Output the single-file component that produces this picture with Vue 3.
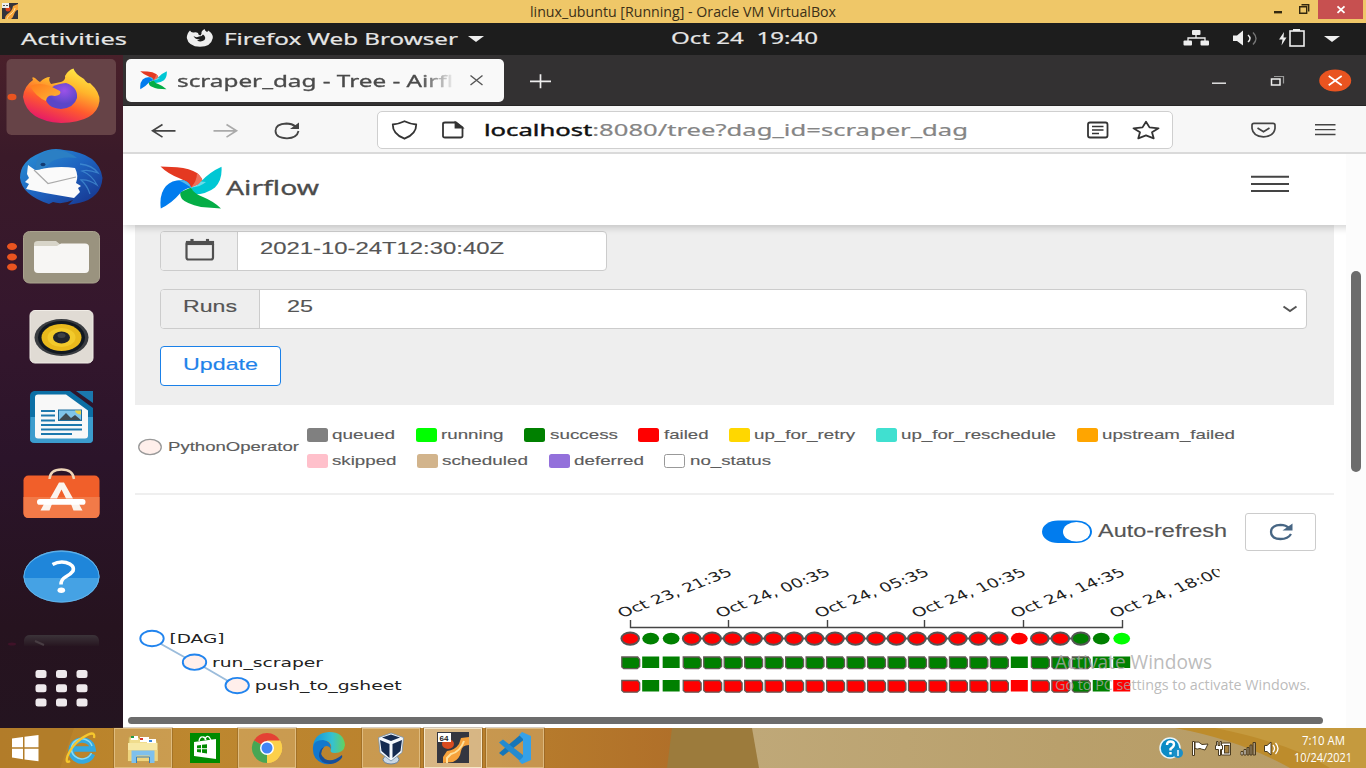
<script setup>
import { h } from 'vue'

// Single line of text fitted to a given width, drawn on baseline b
const T = (p) =>
  h('svg', { width: p.w, height: p.h, viewBox: `0 0 ${p.w} ${p.h}`, overflow: 'visible' }, [
    h('text', { x: 0, y: p.b, 'font-size': p.s, textLength: p.w, lengthAdjust: 'spacingAndGlyphs', fill: 'currentColor' }, p.t),
  ])
T.props = ['t', 'w', 'h', 'b', 's']

const legend = [
  [
    { t: 'queued', w: 63, c: 'gray' },
    { t: 'running', w: 62.5, c: 'lime' },
    { t: 'success', w: 68, c: 'green' },
    { t: 'failed', w: 44.5, c: 'red' },
    { t: 'up_for_retry', w: 101, c: 'gold' },
    { t: 'up_for_reschedule', w: 155, c: 'turquoise' },
    { t: 'upstream_failed', w: 133, c: 'orange' },
  ],
  [
    { t: 'skipped', w: 64.5, c: 'pink' },
    { t: 'scheduled', w: 86, c: 'tan' },
    { t: 'deferred', w: 70, c: 'mediumpurple' },
    { t: 'no_status', w: 81, c: 'white', line: true },
  ],
]

const plain = [1, 2, 19, 23, 24]
const runs = Array.from({ length: 25 }, (_, i) => {
  const ok = [1, 2, 22, 23].includes(i)
  return {
    x: 630.2 + i * 20.48,
    edge: !plain.includes(i),
    dag: i === 24 ? '#00ff00' : ok ? '#008000' : '#ff0000',
    push: ok ? '#008000' : '#ff0000',
  }
})
const ticks = [
  { x: 630.5, t: 'Oct 23, 21:35' },
  { x: 728.5, t: 'Oct 24, 00:35' },
  { x: 827.5, t: 'Oct 24, 05:35' },
  { x: 924.5, t: 'Oct 24, 10:35' },
  { x: 1023.5, t: 'Oct 24, 14:35' },
  { x: 1122.5, t: 'Oct 24, 18:00' },
]
const nodes = [
  { x: 152, y: 638.5, t: '[DAG]', w: 55, f: '#fff' },
  { x: 194.5, y: 662.2, t: 'run_scraper', w: 111, f: '#ffefeb' },
  { x: 237.2, y: 685.6, t: 'push_to_gsheet', w: 147, f: '#ffefeb' },
]
const dots = [0, 1, 2, 3, 4, 5, 6, 7, 8].map((i) => ({ x: 35.5 + (i % 3) * 20.5, y: 13 + Math.floor(i / 3) * 14.2 }))
</script>

<template>
  <div class="screen">
    <header class="title">
      <svg width="20" height="23" viewBox="0 0 20 23">
        <rect x="2" y="3" width="16" height="16" fill="#33343c" />
        <path d="M5 19 C5 13 12 14 13 6 L18 4 V10 C14 10 14 18 11 19Z" fill="#f8a63a" />
        <path d="M7 19 C8 14 14 14 15 8" stroke="#ffe5a8" fill="none" />
        <circle cx="8" cy="9" r="2.5" fill="#e0421b" />
        <rect x="2" y="3" width="7" height="5" fill="#eee" />
        <path d="M3 5.5h2m1 0h2" stroke="#555" />
      </svg>
      <T class="caption" t="linux_ubuntu [Running] - Oracle VM VirtualBox" :w="306" :h="23" :b="17.2" :s="14.6" />
      <svg class="winctl" width="96" height="23" viewBox="1270 0 96 23">
        <rect x="1274" y="11" width="8" height="2.4" fill="#33280f" />
        <path d="M1299.7 6.7h7v6.6h-7zM1301.5 4.7h7.2v6.8" stroke="#33280f" stroke-width="1.4" fill="none" />
        <rect x="1318" y="0" width="45" height="19" fill="#c75050" />
        <path d="M1337.5 6.3l7 6.6m0-6.6l-7 6.6" stroke="#fff" stroke-width="1.8" />
      </svg>
    </header>

    <div class="topbar ubuntu">
      <T class="act" t="Activities" :w="106" :h="32" :b="22" :s="17" />
      <svg class="fxmono" width="28" height="32" viewBox="186 23 28 32">
        <path d="M186.800 38 Q187 33 190 30.500 Q191 33 194 32.500 Q196 32 198 33 Q198 35 200.500 35.500 Q202 33.500 201.500 32 Q202.500 29.800 204.500 29 Q205 31 207 32 Q208 31.500 208 30.500 Q213 33 212.800 38 Q211 46.800 200 46.800 Q188.500 46.500 186.800 38Z" fill="#eee" />
        <path d="M193.500 36 Q196 38 199 36.500 Q202 36.500 203 34.500 Q206.500 37 204.500 40 Q201 42.500 197 40.500 L200 39.500 Q195 39.500 193.500 36Z" fill="#1d1d1d" />
      </svg>
      <T class="app" t="Firefox Web Browser" :w="234" :h="32" :b="22" :s="17" />
      <svg class="caret" width="16" height="32" viewBox="0 0 16 32"><path d="M0 13h16l-8 6z" fill="#eee" /></svg>
      <T class="clock" t="Oct 24&nbsp; 19:40" :w="147" :h="32" :b="21" :s="17" />
      <svg class="tray" width="160" height="32" viewBox="1182 23 160 32">
        <g fill="#eee">
          <rect x="1192" y="30" width="8.500" height="5" rx="1" />
          <rect x="1183.500" y="40.500" width="8.500" height="5" rx="1" />
          <rect x="1200.500" y="40.500" width="8.500" height="5" rx="1" />
          <path d="M1233 35.500h4l6-5v15l-6-4.500h-4z" />
          <path d="M1284 32l-5 7.500h3.500l-1 6 5-8h-3z" />
          <rect x="1293" y="29" width="7" height="2" />
          <path d="M1324 36h16l-8 6z" />
        </g>
        <g fill="none" stroke="#eee">
          <path d="M1196 35v3M1188 41v-3h17v3" stroke-width="1.300" />
          <path d="M1248 35q4 3.500 0 7" stroke-width="1.500" />
          <path d="M1253 32.500q6 6 0 12" stroke="#777" stroke-width="1.400" />
          <rect x="1290" y="31" width="14" height="15" stroke-width="1.600" />
        </g>
      </svg>
    </div>

    <div class="body">
      <nav class="dock">
        <svg width="123" height="80" viewBox="0 57 123 80">
          <defs>
            <linearGradient id="fx" x1="0.8" y1="0" x2="0.3" y2="1"><stop offset="0" stop-color="#fff04a" /><stop offset=".35" stop-color="#ffb52b" /><stop offset=".65" stop-color="#ff5b2e" /><stop offset="1" stop-color="#e4156c" /></linearGradient>
            <linearGradient id="fx2" x1="0" y1="0" x2="1" y2="1"><stop offset="0" stop-color="#ff7a1e" /><stop offset="1" stop-color="#ffb733" /></linearGradient>
            <radialGradient id="fxp" cx=".6" cy=".3"><stop offset="0" stop-color="#9b52e8" /><stop offset="1" stop-color="#5a46c8" /></radialGradient>
          </defs>
          <rect x="6.500" y="59" width="109.500" height="76" rx="5" fill="#664347" />
          <ellipse cx="12" cy="97" rx="4.500" ry="3.200" fill="#e95420" />
          <path d="M23 97 Q24 86 33 80 Q31 76 35 78 Q38 81 40 82 Q45 77 50 77 Q48 80 51 84 L61 82 Q66 80 65 76 Q68 70 73.500 68.500 Q75 74 84 79 Q87 84 90 83 Q100 92 99.500 101 Q97 122 61 123 Q27 121 23 97Z" fill="url(#fx)" />
          <path d="M45 96 Q50 84 66 83 Q78 87 77 98 Q74 108 61 109 Q46 108 45 96Z" fill="url(#fxp)" />
          <path d="M30 86 Q39 82 50 86 L60 91 Q62 95 55 96 Q47 94 46 101 Q36 97 30 86Z" fill="url(#fx2)" />
        </svg>
        <svg width="123" height="80" viewBox="0 137 123 80">
          <defs><linearGradient id="tb" x1="0" y1="0" x2="1" y2="1"><stop offset="0" stop-color="#2b94d6" /><stop offset=".5" stop-color="#1e63c0" /><stop offset="1" stop-color="#162f88" /></linearGradient></defs>
          <path d="M20 178 Q20 161 40 153 Q52 147 64 150 Q99 153 102.500 178 Q101 198 79 203 L68 205 L73 200 Q62 205 53 202 L49 204 Q22 195 20 178Z" fill="url(#tb)" />
          <path d="M28 165 L35 170 Q58 165 75 168 Q79 176 76 183 L81 186 L78 188 L80 192 L74 198 L45 193 L26 189 L29 184 L25 182 L29 178 L27 174Z" fill="#fafafa" />
          <path d="M34 170 L48 183.500 L76 177" fill="none" stroke="#aaa" stroke-width="1.200" />
          <path d="M36 170 Q34 153 53 150 Q66 149 77 158 Q60 156 51 162 Q44 170 36 170Z" fill="#2b7fc4" />
          <ellipse cx="43" cy="164.500" rx="2.500" ry="1.800" fill="#123b72" />
          <path d="M80 164 q12 1 18 9 q-10 -4-16-2 q10 4 15 14 q-9-6-16-5 q6 5 9 14" fill="none" stroke="#4e9fdc" stroke-width="1.300" opacity=".6" />
        </svg>
        <svg width="123" height="80" viewBox="0 217 123 80">
          <ellipse v-for="y in [246.500, 257, 267]" :key="y" cx="12" :cy="y" rx="5" ry="3.500" fill="#e95420" />
          <rect x="23.500" y="231.500" width="76" height="51.500" rx="6" fill="#9a937f" stroke="#aaa38e" />
          <path d="M34 244 q0-3 4-3 h18 l5 4 h23 v5 h-50z" fill="#d8d5c9" />
          <path d="M34 246 h23 l4-2.500 h24 q4 0 4 3.500 v22 q0 4-4 4 h-47 q-4 0-4-4z" fill="#f7f6f4" />
        </svg>
        <svg width="123" height="80" viewBox="0 297 123 80">
          <rect x="30" y="310.500" width="63" height="52.500" rx="5" fill="#e0dbd4" stroke="#f0ece6" />
          <ellipse cx="61.500" cy="337.500" rx="27" ry="18.500" fill="#393c40" />
          <ellipse cx="61.500" cy="337.500" rx="23.500" ry="16.500" fill="#111820" />
          <ellipse cx="61.500" cy="337.500" rx="20" ry="13.500" fill="#e8b91c" />
          <ellipse cx="61.500" cy="337.500" rx="14" ry="9.500" fill="#f2ca2b" />
          <ellipse cx="61.500" cy="337.500" rx="8.500" ry="6" fill="#20242b" />
          <ellipse cx="61.500" cy="335.500" rx="4" ry="2.500" fill="#3c4046" />
        </svg>
        <svg width="123" height="80" viewBox="0 377 123 80">
          <path d="M34 391 h36 l23 17 v31 q0 4-4 4 h-54 q-5 0-5-4 v-43 q0-4 4-5z" fill="#0c6fa5" />
          <path d="M30.500 417h62.500v22q0 4-4 4h-54q-5 0-5-4z" fill="#3c9ccd" />
          <path d="M76 391 h17 v12z" fill="#1b77ad" />
          <path d="M38 394.500 h28 l22 16 v25 q0 3-3 3 h-47 q-3 0-3-3 v-38 q0-3 3-3z" fill="#f8f8f8" />
          <path d="M41 411h14M41 415.500h14M41 420.500h14M41 425h41M41 429.500h41M41 434h31" stroke="#1d78ad" stroke-width="2" />
          <rect x="58.500" y="410" width="23" height="10.500" fill="#7fc5ea" stroke="#1d6c9c" />
          <path d="M59 420l7-7 5 5 4-3 6 5z" fill="#3f4b52" />
          <path d="M75 410.500h6v4q-5 0-6-4z" fill="#e8d44b" />
        </svg>
        <svg width="123" height="80" viewBox="0 457 123 80">
          <rect x="23.500" y="475.500" width="76" height="42.500" rx="5" fill="#f15f2a" />
          <path d="M23.500 497h76v16q0 5-5 5h-66q-5 0-5-5z" fill="#f27a48" />
          <path d="M49.500 479 Q50 469.500 61.500 469.500 Q73 469.500 74 479" fill="none" stroke="#eed5b8" stroke-width="2.400" />
          <path d="M59 482.500h5l9 16h-7l-4.500-9-4.500 9h-7zM44 504h8l-2.500 6.500h-9zM71 504h8l3.500 6.500h-9z" fill="#fbf4ee" />
          <rect x="37" y="499" width="48.500" height="5.800" rx="2.900" fill="#fff" />
        </svg>
        <svg width="123" height="80" viewBox="0 537 123 80">
          <ellipse cx="61.500" cy="576.500" rx="38" ry="26" fill="#45a2e4" />
          <path d="M23.500 578a38 26 0 0 1 76 0z" fill="#1f86da" />
          <ellipse cx="61.500" cy="576.500" rx="37.500" ry="25.600" fill="none" stroke="#6ab8ec" stroke-width=".8" />
          <path d="M52.500 564.500 Q59 561 66 562.500 Q75 565 73 571 Q71 574 65.500 577 Q61 579.500 61 584.500" fill="none" stroke="#fff" stroke-width="3.600" />
          <ellipse cx="61.300" cy="590.200" rx="3.800" ry="2.700" fill="#fff" />
        </svg>
        <svg width="123" height="48" viewBox="0 617 123 48">
          <defs><linearGradient id="term" x1="0" y1="0" x2="0" y2="1"><stop offset="0" stop-color="#3b3339" /><stop offset="1" stop-color="#271620" /></linearGradient></defs>
          <path d="M24 646v-6q1-5 6-5h63q5 0 6 5v6z" fill="url(#term)" />
          <path d="M35 641l9 4" stroke="#483d43" stroke-width="2" />
          <ellipse cx="12" cy="644" rx="4" ry="1.500" fill="#3f1228" />
        </svg>
        <svg width="123" height="50" viewBox="0 8 123 50">
          <rect v-for="(d, i) in dots" :key="i" :x="d.x" :y="d.y" width="11" height="8" rx="2.500" fill="#eee9ec" />
        </svg>
      </nav>

      <section class="browser">
        <div class="tabs ubuntu">
          <div class="tab">
            <svg class="fav" width="27" height="18.500" viewBox="0 0 62 43" preserveAspectRatio="none"><use href="#pinwheel" /></svg>
            <T class="tabname" t="scraper_dag - Tree - Airfl" :w="276" :h="43" :b="28" :s="17" />
            <svg class="tabx" width="14" height="43" viewBox="0 0 14 43"><path d="M.500 16.500l12 9.500m0-9.500l-12 9.500" stroke="#555" stroke-width="1.400" /></svg>
          </div>
          <svg class="plus" width="22" height="51" viewBox="0 0 22 51"><path d="M0 26.300h21M10.500 19.300v14" stroke="#eee" stroke-width="1.700" /></svg>
          <svg class="ctl" width="146" height="51" viewBox="1210 55 146 51">
            <path d="M1212 83.200h14" stroke="#eee" stroke-width="1.400" />
            <rect x="1271.500" y="79" width="8.500" height="6" fill="none" stroke="#eee" stroke-width="1.500" />
            <path d="M1274 76.500h9.500v7" fill="none" stroke="#999" stroke-width="1.200" />
            <ellipse cx="1335.200" cy="80.500" rx="16" ry="11" fill="#e95420" />
            <path d="M1328.700 76l13 9.300m0-9.300l-13 9.300" stroke="#fff" stroke-width="1.700" />
          </svg>
        </div>

        <div class="toolbar ubuntu">
          <svg class="nav" width="150" height="48" viewBox="151 106 150 48" fill="none">
            <path d="M175.500 130.800h-23m10-6.300l-10 6.300 10 6.300" stroke="#444" stroke-width="1.700" />
            <path d="M213.500 130.800h23m-10-6.300l10 6.300-10 6.300" stroke="#aaa" stroke-width="1.700" />
            <path d="M295.500 126.500Q292 123.500 286.500 123.500Q275.500 124 275.500 130.800Q275.500 138 287 138.300Q297 138 298.500 131" stroke="#444" stroke-width="1.800" />
            <path d="M299 122.500v6.500h-9z" fill="#444" />
          </svg>
          <div class="url">
            <svg width="76" height="36" viewBox="390 112 76 36" fill="none" stroke="#333" stroke-width="1.800">
              <path d="M404.500 121.300 Q410 124 416.200 124.500 Q416.500 134 404.500 138.700 Q392.500 134 392.800 124.500 Q399 124 404.500 121.300Z" />
              <path d="M445 122.500h11l6.500 5v8.500q0 1.500-2 1.500h-15.500q-2 0-2-1.500v-12q0-1.500 2-1.500z" />
              <path d="M455.500 122.500v5h6.500z" fill="#333" />
            </svg>
            <svg class="addr" width="484" height="36" viewBox="0 0 484 36"><text x="0" y="24.400" font-size="17" textLength="484" lengthAdjust="spacingAndGlyphs" fill="#858585"><tspan class="host">localhost</tspan>:8080/tree?dag_id=scraper_dag</text></svg>
            <svg class="acts" width="74" height="36" viewBox="1086 112 74 36" fill="none" stroke="#333" stroke-width="1.800">
              <rect x="1088" y="122.500" width="19.500" height="15" rx="2" />
              <path d="M1092 126.500h11.500M1092 130h11.500M1092 133.500h7" stroke-width="1.300" />
              <path d="M1146 121.700l3.500 5.700 9 .9-6.500 4 1.700 6-7.700-3-7.700 3 1.700-6-6.500-4 9-.9z" stroke-linejoin="round" />
            </svg>
          </div>
          <svg class="menu" width="88" height="48" viewBox="1250 106 88 48" fill="none" stroke="#444" stroke-width="1.700">
            <path d="M1254 123.300h19q2 0 2 2v3q-1 8-11.500 8.500q-10.500-.5-11.500-8.500v-3q0-2 2-2zM1257.500 128l6 3.800 6-3.800" />
            <path d="M1315 124.800h20.500M1315 129.600h20.500M1315 134.500h20.500" stroke-width="1.400" />
          </svg>
        </div>

        <main class="page">
          <header class="brand">
            <svg width="62" height="43" viewBox="0 0 62 43">
              <g id="pinwheel">
                <path d="M.500 .500 L17 1.300 Q30 2.500 37 7 Q43 12 42.500 16.500 L31 21.500 Q28 15.500 20 12.500 Q8 8 .500 .500Z" fill="#e43921" />
                <path d="M37 7 Q43 12 42.500 16.500 L31 21.500 Q37 15 37 7Z" fill="#f0705a" />
                <path d="M61.500 .800 Q62.500 14 55 21.500 Q47 28 34 28.500 L31 21.500 Q38 20.500 41.500 15 Q50 6 61.500 .800Z" fill="#00c7d4" />
                <path d="M31 21.500 Q40 21 46 16 L41 15.500 Q38 20 31 21.500Z" fill="#66ddeb" />
                <path d="M61 42.500 L41 41 Q26 37.500 22 33 Q19.500 29 20.500 26 L31 21.500 Q34 28 43 31 Q54 35.500 61 42.500Z" fill="#04ad46" />
                <path d="M.800 42.500 Q-1 28 6 20 Q12 13.500 23 14 Q30 16 31 21.500 Q23 23 19.500 28 Q12 37 .800 42.500Z" fill="#017cee" />
                <path d="M18 14 Q29 13 31 21.500 Q24 16.500 18 14Z" fill="#53b7e8" />
              </g>
            </svg>
            <T class="wordmark ubuntu" t="Airflow" :w="93" :h="70" :b="41" :s="20" />
            <svg class="burger" width="38" height="71" viewBox="0 0 38 71"><path d="M0 22.700h38M0 30h38M0 37h38" stroke="#444" stroke-width="2" /></svg>
          </header>

          <div class="content">
            <form class="filters" @submit.prevent>
              <div class="group date">
                <div class="addon cal">
                  <svg width="30" height="24" viewBox="0 0 30 24"><rect x="1.500" y="4" width="26.500" height="17.500" rx="2" fill="none" stroke="#505050" stroke-width="2.200" /><path d="M1 3h28v4h-28zM5.500 1h3v3h-3zM21 1h3v3h-3z" fill="#505050" /></svg>
                </div>
                <T class="val" t="2021-10-24T12:30:40Z" :w="244" :h="38" :b="22.400" :s="17" />
              </div>
              <div class="group runs">
                <div class="addon"><T t="Runs" :w="54" :h="37" :b="21.800" :s="17" /></div>
                <T class="num" t="25" :w="26" :h="37" :b="22" :s="17" />
                <svg class="chev" width="16" height="37" viewBox="0 0 16 37"><path d="M1.500 16.500l6.500 4.500 6.500-4.500" stroke="#555" stroke-width="2" fill="none" /></svg>
              </div>
              <button class="update"><T t="Update" :w="75" :h="37" :b="21.800" :s="17" /></button>
            </form>

            <div class="legend">
              <svg width="26" height="26" viewBox="0 0 26 26"><ellipse cx="13" cy="13" rx="11.300" ry="7.600" fill="#ffefeb" stroke="#999" stroke-width="1.300" /></svg>
              <T class="op" t="PythonOperator" :w="131" :h="26" :b="17" :s="13" />
              <div class="states">
                <div v-for="(row, r) in legend" :key="r" class="srow">
                  <span v-for="s in row" :key="s.t" class="state">
                    <i class="sw" :class="{ line: s.line }" :style="{ background: s.c }"></i>
                    <T :t="s.t" :w="s.w" :h="26" :b="17" :s="13" />
                  </span>
                </div>
              </div>
            </div>

            <div class="refresh">
              <svg width="50" height="24" viewBox="0 0 50 24"><rect y=".500" width="50" height="22.500" rx="16" ry="11.200" fill="#017cee" /><ellipse cx="34.500" cy="11.700" rx="13.500" ry="9.800" fill="#fff" /></svg>
              <T class="auto" t="Auto-refresh" :w="129" :h="38" :b="24" :s="17.500" />
              <button class="again">
                <svg width="26" height="20" viewBox="0 0 26 20"><path d="M21.500 6.500Q18 2.800 12.500 2.800Q3 3.300 3 10Q3 16.700 12.500 17Q20 17 23 12" fill="none" stroke="#476684" stroke-width="2.300" /><path d="M24.500 1.500v7h-10z" fill="#476684" /></svg>
              </button>
            </div>

            <svg class="tree" width="1199" height="140" viewBox="135 569 1199 140">
              <path d="M161 644L186 658M204 667L228 681" stroke="#9bbcdb" stroke-width="2" />
              <g v-for="n in nodes" :key="n.t">
                <ellipse :cx="n.x" :cy="n.y" rx="11.700" ry="7.700" :fill="n.f" stroke="#2184ee" stroke-width="1.900" />
                <text :x="n.x + 17.500" :y="n.y + 4.500" font-size="12.500" :textLength="n.w" lengthAdjust="spacingAndGlyphs" fill="#222">{{ n.t }}</text>
              </g>
              <path d="M630.500 620v7.500H1122.500V620M728.500 620v7.500M827.500 620v7.500M924.500 620v7.500M1023.500 620v7.500" fill="none" stroke="#444" stroke-width="1.400" />
              <svg x="600" y="568.500" width="619.500" height="60" viewBox="600 568.500 619.500 60">
                <g v-for="k in ticks" :key="k.x" :transform="`translate(${k.x - 8.5} 618) scale(1.400 .980) rotate(-29)`">
                  <text font-size="13" textLength="91" lengthAdjust="spacingAndGlyphs" fill="#222">{{ k.t }}</text>
                </g>
              </svg>
              <path d="M692 638.500H1000M1040 638.500H1080" stroke="#555" stroke-width="2" />
              <g v-for="r in runs" :key="r.x">
                <ellipse :cx="r.x" cy="638.600" :rx="r.edge ? 8.8 : 8.400" :ry="r.edge ? 6.100 : 5.800" :fill="r.dag" :stroke="r.edge ? '#555' : 'none'" stroke-width="2" />
                <template v-if="r.edge">
                  <path :transform="`translate(${r.x} 656.500)`" d="M-8.400.500H7.500L9.500 3V10L7 12.200H-6.500L-8.400 10.500Z" fill="#008000" stroke="#625a55" stroke-width="1.300" />
                  <path :transform="`translate(${r.x} 680)`" d="M-8.400.500H7.500L9.500 3V10L7 12.200H-6.500L-8.400 10.500Z" :fill="r.push" stroke="#625a55" stroke-width="1.300" />
                </template>
                <template v-else>
                  <rect :x="r.x - 8.500" y="656.500" width="17" height="11.500" fill="#008000" />
                  <rect :x="r.x - 8.500" y="680" width="17" height="11.500" :fill="r.push" />
                </template>
              </g>
            </svg>
          </div>
          <i class="gutter"></i>
          <i class="vbar"></i>
          <i class="hbar"></i>
        </main>
      </section>
    </div>

    <div class="watermark">
      <T t="Activate Windows" :w="157" :h="24" :b="17" :s="20" />
      <T t="Go to PC settings to activate Windows." :w="255" :h="20" :b="14" :s="15" />
    </div>

    <footer class="taskbar">
      <svg class="paper" width="1366" height="40" viewBox="0 0 1366 40" preserveAspectRatio="none">
        <defs>
          <linearGradient id="w1"><stop offset="0" stop-color="#b88128" /><stop offset=".3" stop-color="#bd872f" /><stop offset=".7" stop-color="#b9802d" /><stop offset="1" stop-color="#b06f29" /></linearGradient>
          <linearGradient id="w2"><stop offset="0" stop-color="#bfa878" /><stop offset=".5" stop-color="#b9a06c" /><stop offset="1" stop-color="#b79a61" /></linearGradient>
        </defs>
        <rect width="680" height="40" fill="url(#w1)" />
        <path d="M0 0H74L60 40H0Z" fill="#ad7a2a" opacity=".6" />
        <path d="M672 0H753L760 40H667Z" fill="#9c7b3c" />
        <path d="M752 0H1366V40H759Z" fill="url(#w2)" />
        <path d="M1175 0H1366V40H1290Q1240 12 1175 0Z" fill="#bd8c2c" />
        <path d="M1215 0H1366V40H1330Q1290 15 1215 0Z" fill="#c59a3e" />
      </svg>
      <svg class="start" width="52" height="40" viewBox="0 0 52 40"><path d="M12 10.500L23 9v10.300H12zM24.500 8.800L38.500 7v12.300H24.500zM12 20.800H23v10.400L12 29.600zM24.500 20.800H38.500V33.300L24.500 31.400z" fill="#fff" /></svg>
      <div class="apps">
        <span class="btn"><svg width="58" height="40" viewBox="0 0 58 40">
          <path d="M40.500 26A11 10.500 0 1 1 41 21H22" fill="none" stroke="#35a9df" stroke-width="5.500" />
          <path d="M39.500 25A10.500 10 0 1 1 40 18" fill="none" stroke="#8bdcf5" stroke-width="1.500" />
          <path d="M18 33Q13 36 15.500 28Q20 17 30 10Q44 1 42 10" fill="none" stroke="#f6c72d" stroke-width="2.300" />
        </svg></span>
        <span class="btn open"><svg width="58" height="40" viewBox="0 0 58 40">
          <path d="M15 9h9l2 2h9l1 2h7v20H14z" fill="#f0dc8d" stroke="#c7a950" />
          <path d="M17 8h7v4h-7zM26 9h9v5h-9zM33 11h9v5h-9z" fill="#fff" />
          <path d="M17 9h3" stroke="#219b42" stroke-width="2" /><path d="M26 11h3" stroke="#d83a2c" stroke-width="2" /><path d="M35 13h3" stroke="#3b86d8" stroke-width="2" />
          <path d="M14 15h29.500v18H14z" fill="#f7e8a5" /><path d="M14 22h29.500v11H14z" fill="#efd47e" />
          <path d="M20 35V25h18v10" fill="none" stroke="#7ec0ec" stroke-width="5" /><path d="M22.500 35v-6h13v6" fill="none" stroke="#397fb9" />
        </svg></span>
        <span class="btn"><svg width="58" height="40" viewBox="0 0 58 40">
          <rect x="14" y="5" width="30" height="30" fill="#008a00" />
          <path d="M18 14l22-3v20l-22-3z" fill="#fff" /><path d="M23 13q1-5 4-4 2 0 3 3M29 12q1-5 4-3l2 3" fill="none" stroke="#fff" stroke-width="1.300" />
          <path d="M21 17.500l4-.5v3.300h-4zM26 16.800l5-.6v4h-5zM21 21.300h4v3.300l-4-.5zM26 21.300h5v4.200l-5-.7z" fill="#008a00" />
        </svg></span>
        <span class="btn open"><svg width="58" height="40" viewBox="0 0 58 40">
          <path d="M29 20L16 12.500A15 15 0 0 1 42 12.500Z" fill="#e44234" />
          <path d="M29 20L42 12.500A15 15 0 0 1 29 35Z" fill="#fcd04b" />
          <path d="M16 12.500L29 20V35A15 15 0 0 1 16 12.500Z" fill="#47a654" />
          <path d="M29 12.500H42A15 15 0 0 1 29 35L35.500 23.500Z" fill="#fcd04b" />
          <circle cx="29" cy="20" r="7" fill="#fff" /><circle cx="29" cy="20" r="5.500" fill="#4285f4" />
        </svg></span>
        <span class="btn"><svg width="58" height="40" viewBox="0 0 58 40">
          <defs><linearGradient id="ed"><stop offset="0" stop-color="#1193dc" /><stop offset=".6" stop-color="#35c1d2" /><stop offset="1" stop-color="#65d25a" /></linearGradient></defs>
          <path d="M13 19Q14 5 29 4Q44 4 45 17Q44 25 35 25Q29 25 31 21Q32 13 25 13Q15 13 13 19Z" fill="url(#ed)" />
          <path d="M13 19Q14 12 23 12Q31 13 31 21Q28 16 24 19Q19 23 22 29Q27 36 35 34Q29 38 22 35Q12 31 13 19Z" fill="#1278ce" />
          <path d="M24 19Q18 26 25 31Q32 35 42 27Q43 29 41 31Q36 36 30 36Q20 35 19 28Q19 21 24 19Z" fill="#164f9b" />
        </svg></span>
        <span class="btn open"><svg width="58" height="40" viewBox="0 0 58 40">
          <ellipse cx="29" cy="31.500" rx="8" ry="4.500" fill="#cbd8e5" stroke="#65829f" />
          <path d="M16.500 9.500L29 5l12.500 4.500-1.500 15L29 33 18 24.500z" fill="#f4f8fc" stroke="#7590ab" stroke-width=".8" />
          <path d="M20 9.500L29 6.500l9 3-9 3.500zM18 12l9.500 4v14L19.500 23zM40 12l-9.500 4v14l8-7z" fill="#152b50" />
        </svg></span>
        <span class="btn open current"><svg width="58" height="40" viewBox="0 0 58 40">
          <rect x="13" y="4" width="32" height="31" fill="#343640" />
          <path d="M19 35v-6l4-6q8-1 12-7l2-6 8-1v8q-7 0-8 6-1 8-8 11z" fill="#f7a23b" /><path d="M23 35v-5l4-4q9-2 13-13" stroke="#ffe09a" stroke-width="2" fill="none" />
          <ellipse cx="24" cy="16" rx="6" ry="5" fill="#d94b20" />
          <rect x="14" y="5" width="13" height="9" fill="#fff" /><text x="15.500" y="12.500" font-size="8" font-weight="700" fill="#222">64</text>
        </svg></span>
        <span class="btn open"><svg width="58" height="40" viewBox="0 0 58 40">
          <path d="M37 4.500v8L17 28l-4-3z" fill="#1676b8" /><path d="M13 14.500l4-3L37 27v8.500z" fill="#238bd0" /><path d="M36 4l9 4v24l-9 4-3-3 4-4V11l-4-4z" fill="#35a1e8" />
        </svg></span>
      </div>
      <svg class="systray" width="122" height="40" viewBox="1158 728 122 40">
        <circle cx="1170" cy="748" r="10" fill="#0b8bc5" stroke="#e8f5fb" stroke-width="1.500" />
        <path d="M1167 745q0-3.500 3.500-3.500t3.500 3q0 2-3.500 4.500v1.500M1170.500 752v2.500" stroke="#fff" stroke-width="2.400" fill="none" />
        <circle cx="1178" cy="753" r="5" fill="#1b8fc8" /><path d="M1178 750v6" stroke="#fff" stroke-width="1.400" />
        <g stroke="#4a3b20" stroke-width="1" fill="#fff">
          <path d="M1192.500 741.500h2v14h-2z" /><path d="M1195 742q4-1 7 2.500l6-.500-3 6q-4-1-5-1.500-3 1-5 0z" />
          <path d="M1222.500 743h8v12h-9v-11z" fill="#fff" /><rect x="1224.500" y="745.500" width="4.500" height="7.500" fill="#a98442" />
          <path d="M1216.500 741.500v4h-1v4h3v6h2v-6h2v-4h-1v-4h-1.500v4h-2v-4z" />
          <path d="M1241 751.500h2v3.500h-2zM1244 749.500h2v5.500h-2z" /><path d="M1247 747.500h2v7.500h-2zM1250 745h2v10h-2zM1253 742.500h2.500v12.500h-2.500z" fill="#a89677" />
          <path d="M1264.500 745.500h2.500l4-3.500v13l-4-3.500h-2.500z" />
        </g>
        <path d="M1273 745q3 3.500 0 7M1275.500 743q5 5.500 0 11" fill="none" stroke="#fff" stroke-width="1.300" />
      </svg>
      <div class="time">
        <T t="7:10 AM" :w="43" :h="16" :b="13" :s="12" />
        <T t="10/24/2021" :w="58" :h="16" :b="14" :s="12" />
      </div>
    </footer>
  </div>
</template>

<style>
body { margin: 0; overflow: hidden; }
</style>

<style scoped>
.screen { position: relative; width: 1366px; height: 768px; display: flex; flex-direction: column; overflow: hidden; background: #fff; font-family: "Liberation Sans", Arial, sans-serif; }
svg { display: block; flex: none; }
.ubuntu { font-family: "Noto Sans", "Open Sans", sans-serif; }

.title { height: 23px; flex: none; display: flex; background: #efc768; color: #3c3017; font-family: "Open Sans", sans-serif; }
.caption { margin-left: 510px; }
.winctl { margin-left: auto; }

.topbar { height: 32px; flex: none; display: flex; background: #1d1d1d; color: #e6e6e6; stroke-width: .2px; }
.act, .app, .clock { stroke: currentColor; }
.act { margin-left: 21px; }
.fxmono { margin-left: 59px; }
.app { margin-left: 10px; }
.caret { margin-left: 10px; }
.clock { margin-left: 187px; }
.tray { margin-left: auto; margin-right: 24px; }

.body { height: 673px; flex: none; display: flex; }
.dock { width: 123px; flex: none; padding-top: 2px; box-sizing: border-box; overflow: hidden; background: linear-gradient(180deg, #49202a 0, #3a1a29 15%, #35172d 38%, #2b142a 60%, #26131f 85%, #241420 100%); }
.browser { flex: 1; display: flex; flex-direction: column; min-width: 0; }

.tabs { height: 51px; flex: none; display: flex; background: #333132; border-bottom: 1px solid #262525; box-sizing: border-box; }
.tab { width: 378px; height: 43px; margin: 4px 0 0 3px; flex: none; display: flex; align-items: center; box-sizing: border-box; padding-left: 14px; background: #f9f9f9; border-radius: 5px; color: #4a4a4a; }
.tabname { margin-left: 10px; stroke: currentColor; stroke-width: .3px; mask-image: linear-gradient(90deg, #000 88%, transparent 101%); }
.tabx { margin-left: 17px; }
.plus { margin-left: 26px; }
.ctl { margin-left: auto; margin-right: 10px; }

.toolbar { height: 48px; flex: none; display: flex; background: #f7f7f7; border-bottom: 2px solid #dadada; box-sizing: border-box; }
.nav { margin-left: 28px; }
.url { width: 796px; height: 38px; margin: 5px 0 0 76px; box-sizing: border-box; border: 1.500px solid #cfcfcf; border-radius: 5px; background: #fff; display: flex; padding-left: 12px; }
.addr { margin-left: 18px; stroke: #858585; stroke-width: .2px; }
.host { fill: #111; stroke: #111; stroke-width: .4px; }
.acts { margin-left: 118px; }
.menu { margin-left: 77px; }

.page { position: relative; flex: 1; overflow: hidden; background: #fff; }
.brand { position: relative; z-index: 2; height: 71px; display: flex; align-items: flex-start; background: #fff; box-shadow: 0 2px 8px rgba(0, 0, 0, .2); color: #4b4b4b; padding: 0 77px 0 37px; }
.brand > svg:first-child { margin-top: 12px; }
.wordmark { margin-left: 4px; stroke: currentColor; stroke-width: .3px; }
.burger { margin-left: auto; }

.content { margin: 0 32px 0 12px; }
.filters { height: 180px; box-sizing: border-box; padding: 6px 26px 0 25.400px; background: #eee; color: #555; stroke: currentColor; stroke-width: .15px; }
.group { height: 40px; box-sizing: border-box; display: flex; border: 1.500px solid #ccc; border-radius: 4px; background: #fff; overflow: hidden; }
.date { width: 447px; }
.runs { margin-top: 18px; width: 1147px; }
.addon { box-sizing: border-box; background: #eee; border-right: 1.500px solid #ccc; padding: 0 22px; }
.cal { width: 77px; padding: 6px 0 0 24px; }
.val { margin-left: 21.500px; }
.num { margin-left: 27px; }
.chev { margin-left: auto; margin-right: 8px; }
.update { display: block; margin-top: 17px; width: 121px; height: 40px; box-sizing: border-box; padding: 0 0 0 22px; border: 1.500px solid #1a80e8; border-radius: 4px; background: #fff; color: #1f83ea; font-family: inherit; stroke: currentColor; }

.legend { height: 90px; box-sizing: border-box; padding: 17px 0 0 2px; display: flex; border-bottom: 2px solid #efefef; color: #5c5c5c; }
.legend > svg { margin-top: 12px; }
.op, .state { stroke: currentColor; stroke-width: .15px; }
.op { margin-left: 5px; }
.states { margin-left: 8px; }
.srow { display: flex; gap: 20.700px; height: 26px; }
.srow + .srow { gap: 20.300px; }
.state { display: flex; align-items: center; gap: 4.300px; }
.sw { width: 21px; height: 14px; border-radius: 2.500px; box-sizing: border-box; }
.line { border: 1.500px solid #999; }

.refresh { display: flex; justify-content: flex-end; padding: 18px 18px 0 0; height: 56px; box-sizing: border-box; color: #555; }
.refresh > svg:first-child { margin-top: 7px; }
.auto { margin-left: 6px; stroke: currentColor; stroke-width: .15px; }
.again { width: 71px; height: 38px; margin-left: 18px; box-sizing: border-box; border: 1.500px solid #ccc; border-radius: 3px; background: #fff; display: flex; align-items: center; justify-content: center; padding: 0; }
.tree { margin-top: 18px; font-family: "DejaVu Sans", sans-serif; }
.gutter { position: absolute; right: 0; top: 0; width: 20px; height: 574px; background: #fcfcfc; z-index: 3; }
.vbar { position: absolute; z-index: 4; left: 1228px; top: 117px; width: 10px; height: 201px; border-radius: 5px; background: #6c6c6c; }
.hbar { position: absolute; z-index: 4; left: 5px; top: 563px; width: 1195px; height: 7px; border-radius: 4px; background: #6c6c6c; }

.watermark { position: absolute; left: 1055px; top: 652px; color: rgba(170, 170, 170, .8); font-family: "Open Sans", sans-serif; font-weight: 400; }

.taskbar { position: relative; height: 40px; flex: none; display: flex; }
.paper { position: absolute; left: 0; top: 0; }
.start, .apps, .systray, .time { position: relative; }
.apps { display: flex; gap: 4px; }
.btn { width: 58px; height: 40px; }
.open { background: rgba(235, 210, 160, .3); box-shadow: inset 0 0 0 1px rgba(240, 215, 165, .55), 0 0 0 1px rgba(90, 60, 20, .25); }
.current { background: rgba(245, 235, 220, .5); box-shadow: inset 0 0 0 1px #f5e6c8, 0 0 0 1px rgba(90, 60, 20, .3); }
.systray { margin-left: auto; }
.time { width: 86px; display: flex; flex-direction: column; align-items: center; padding-top: 4px; color: #fff; font-family: "Open Sans", sans-serif; }
</style>
